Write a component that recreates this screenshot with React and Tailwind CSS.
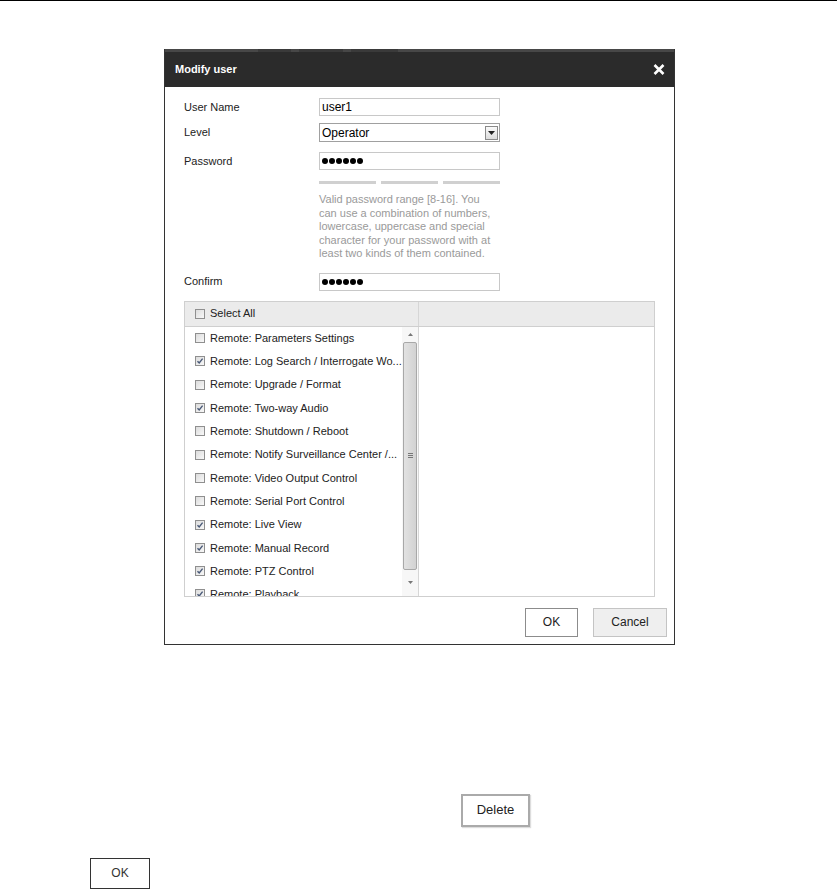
import React from "react";

const rows = [
  ["Remote: Parameters Settings", false],
  ["Remote: Log Search / Interrogate Wo...", true],
  ["Remote: Upgrade / Format", false],
  ["Remote: Two-way Audio", true],
  ["Remote: Shutdown / Reboot", false],
  ["Remote: Notify Surveillance Center /...", false],
  ["Remote: Video Output Control", false],
  ["Remote: Serial Port Control", false],
  ["Remote: Live View", true],
  ["Remote: Manual Record", true],
  ["Remote: PTZ Control", true],
  ["Remote: Playback", true],
];

const help = [
  "Valid password range [8-16]. You",
  "can use a combination of numbers,",
  "lowercase, uppercase and special",
  "character for your password with at",
  "least two kinds of them contained.",
];

function Check({ checked }) {
  return (
    <span className="flex h-[10px] w-[10px] shrink-0 items-center justify-center border border-[#8f8f8f] bg-gradient-to-br from-[#dcdcdc] to-[#f8f8f8]">
      {checked && (
        <svg width="8" height="8" viewBox="0 0 8 8">
          <path d="M1.5 4.2 L3.2 6 L6.6 1.6" fill="none" stroke="#4a5a78" strokeWidth="1.4" />
        </svg>
      )}
    </span>
  );
}

function Dots() {
  return (
    <span className="flex items-center gap-[1px] pl-[2px]">
      {[0, 1, 2, 3, 4, 5].map((i) => (
        <span key={i} className="h-[6px] w-[6px] rounded-full bg-black" />
      ))}
    </span>
  );
}

export default function App() {
  return (
    <div
      className="relative h-[892px] w-[837px] overflow-hidden bg-white text-[11px] text-[#222]"
      style={{ fontFamily: '"Liberation Sans", Arial, sans-serif' }}
    >
      <div className="h-[1px] w-full bg-black" />
      <div className="ml-[164px] mt-[48px] w-[511px] border border-t-0 border-[#333] bg-white">
        {/* title bar */}
        <div className="relative h-[38px] bg-[#2b2b2b]">
          <div className="flex h-[3px] bg-[#474747]">
            <div className="w-[93px]" />
            <div className="w-[33px] bg-[#3a3a3a]" />
            <div className="w-[8px]" />
            <div className="w-[44px] bg-[#3a3a3a]" />
            <div className="w-[8px]" />
            <div className="w-[47px] bg-[#3a3a3a]" />
          </div>
          <div className="flex h-[35px] items-center justify-between pl-[10px] pr-[9px]">
            <span className="text-[11px] font-bold text-white">Modify user</span>
            <svg width="12" height="11" viewBox="0 0 12 11">
              <path d="M1.5 1 L10.5 10 M10.5 1 L1.5 10" stroke="white" strokeWidth="2.6" />
            </svg>
          </div>
        </div>

        {/* form */}
        <div className="pl-[19px] pt-[11px]">
          <div className="flex h-[18px] items-center">
            <span className="w-[135px]">User Name</span>
            <div className="flex h-[18px] w-[181px] items-center border border-[#c8c8c8] px-[2px] text-[12px] text-black">user1</div>
          </div>
          <div className="mt-[7px] flex h-[19px] items-center">
            <span className="w-[135px]">Level</span>
            <div className="flex h-[19px] w-[181px] items-center justify-between border border-[#a0a0a0] pl-[2px] pr-[1px] text-[12px] text-black">
              <span>Operator</span>
              <span className="flex h-[14px] w-[13px] items-center justify-center border border-[#8a8a8a] bg-gradient-to-b from-[#fafafa] to-[#dcdcdc]">
                <svg width="7" height="4" viewBox="0 0 7 4">
                  <path d="M0 0 H7 L3.5 4 Z" fill="#222" />
                </svg>
              </span>
            </div>
          </div>
          <div className="mt-[10px] flex h-[18px] items-center">
            <span className="w-[135px]">Password</span>
            <div className="flex h-[18px] w-[181px] items-center border border-[#c8c8c8]">
              <Dots />
            </div>
          </div>
          <div className="ml-[135px] mt-[11px] flex w-[181px] gap-[5px]">
            <div className="h-[3px] flex-1 bg-[#d0d0d0]" />
            <div className="h-[3px] flex-1 bg-[#d0d0d0]" />
            <div className="h-[3px] flex-1 bg-[#d0d0d0]" />
          </div>
          <div className="ml-[135px] mt-[9px] whitespace-nowrap text-[11px] leading-[13.5px] text-[#9a9a9a]">
            {help.map((l, i) => (
              <div key={i}>{l}</div>
            ))}
          </div>
          <div className="mt-[12px] flex h-[18px] items-center">
            <span className="w-[135px]">Confirm</span>
            <div className="flex h-[18px] w-[181px] items-center border border-[#c8c8c8]">
              <Dots />
            </div>
          </div>

          {/* table */}
          <div className="mt-[10px] w-[471px] border border-[#cfcfcf]">
            <div className="flex h-[25px] border-b border-[#cfcfcf] bg-[#ebebeb]">
              <div className="flex w-[234px] items-center gap-[5px] border-r border-[#d6d6d6] pl-[10px]">
                <Check checked={false} />
                <span>Select All</span>
              </div>
              <div className="flex-1" />
            </div>
            <div className="flex h-[269px]">
              <div className="flex w-[234px] border-r border-[#d6d6d6]">
                <div className="w-[218px] overflow-hidden">
                  {rows.map(([label, c], i) => (
                    <div key={i} className="flex h-[23.3px] items-center gap-[5px] whitespace-nowrap pl-[10px]">
                      <Check checked={c} />
                      <span>{label}</span>
                    </div>
                  ))}
                </div>
                <div className="flex w-[16px] flex-col items-center bg-[#f7f7f7]">
                  <div className="flex h-[15px] items-center justify-center">
                    <svg width="5" height="3" viewBox="0 0 5 3"><path d="M0 3 H5 L2.5 0 Z" fill="#777" /></svg>
                  </div>
                  <div className="flex h-[228px] w-[14px] items-center justify-center rounded-[2px] border border-[#a8a8a8] bg-gradient-to-r from-[#e2e2e2] to-[#d2d2d2]">
                    <div className="flex flex-col gap-[1px]">
                      <div className="h-[1px] w-[5px] bg-[#777]" />
                      <div className="h-[1px] w-[5px] bg-[#777]" />
                      <div className="h-[1px] w-[5px] bg-[#777]" />
                    </div>
                  </div>
                  <div className="flex flex-1 items-center justify-center">
                    <svg width="5" height="3" viewBox="0 0 5 3"><path d="M0 0 H5 L2.5 3 Z" fill="#777" /></svg>
                  </div>
                </div>
              </div>
              <div className="flex-1" />
            </div>
          </div>
        </div>

        {/* buttons */}
        <div className="flex justify-end gap-[15px] pb-[7px] pr-[7px] pt-[11px]">
          <button className="h-[29px] w-[53px] border border-[#8c8c8c] bg-white text-[12px] text-[#222]">OK</button>
          <button className="h-[29px] w-[74px] border border-[#c4c4c4] bg-[#efefef] text-[12px] text-[#222]">Cancel</button>
        </div>
      </div>

      <div className="ml-[461px] mt-[149px] flex h-[33px] w-[69px] items-center justify-center border-2 border-[#aaa] bg-white text-[13px] text-[#222] shadow-[1px_1px_1px_#ddd]">
        Delete
      </div>
      <div className="ml-[90px] mt-[31px] flex h-[31px] w-[60px] items-center justify-center border border-[#333] bg-white text-[12px] text-[#333]">
        OK
      </div>
    </div>
  );
}
